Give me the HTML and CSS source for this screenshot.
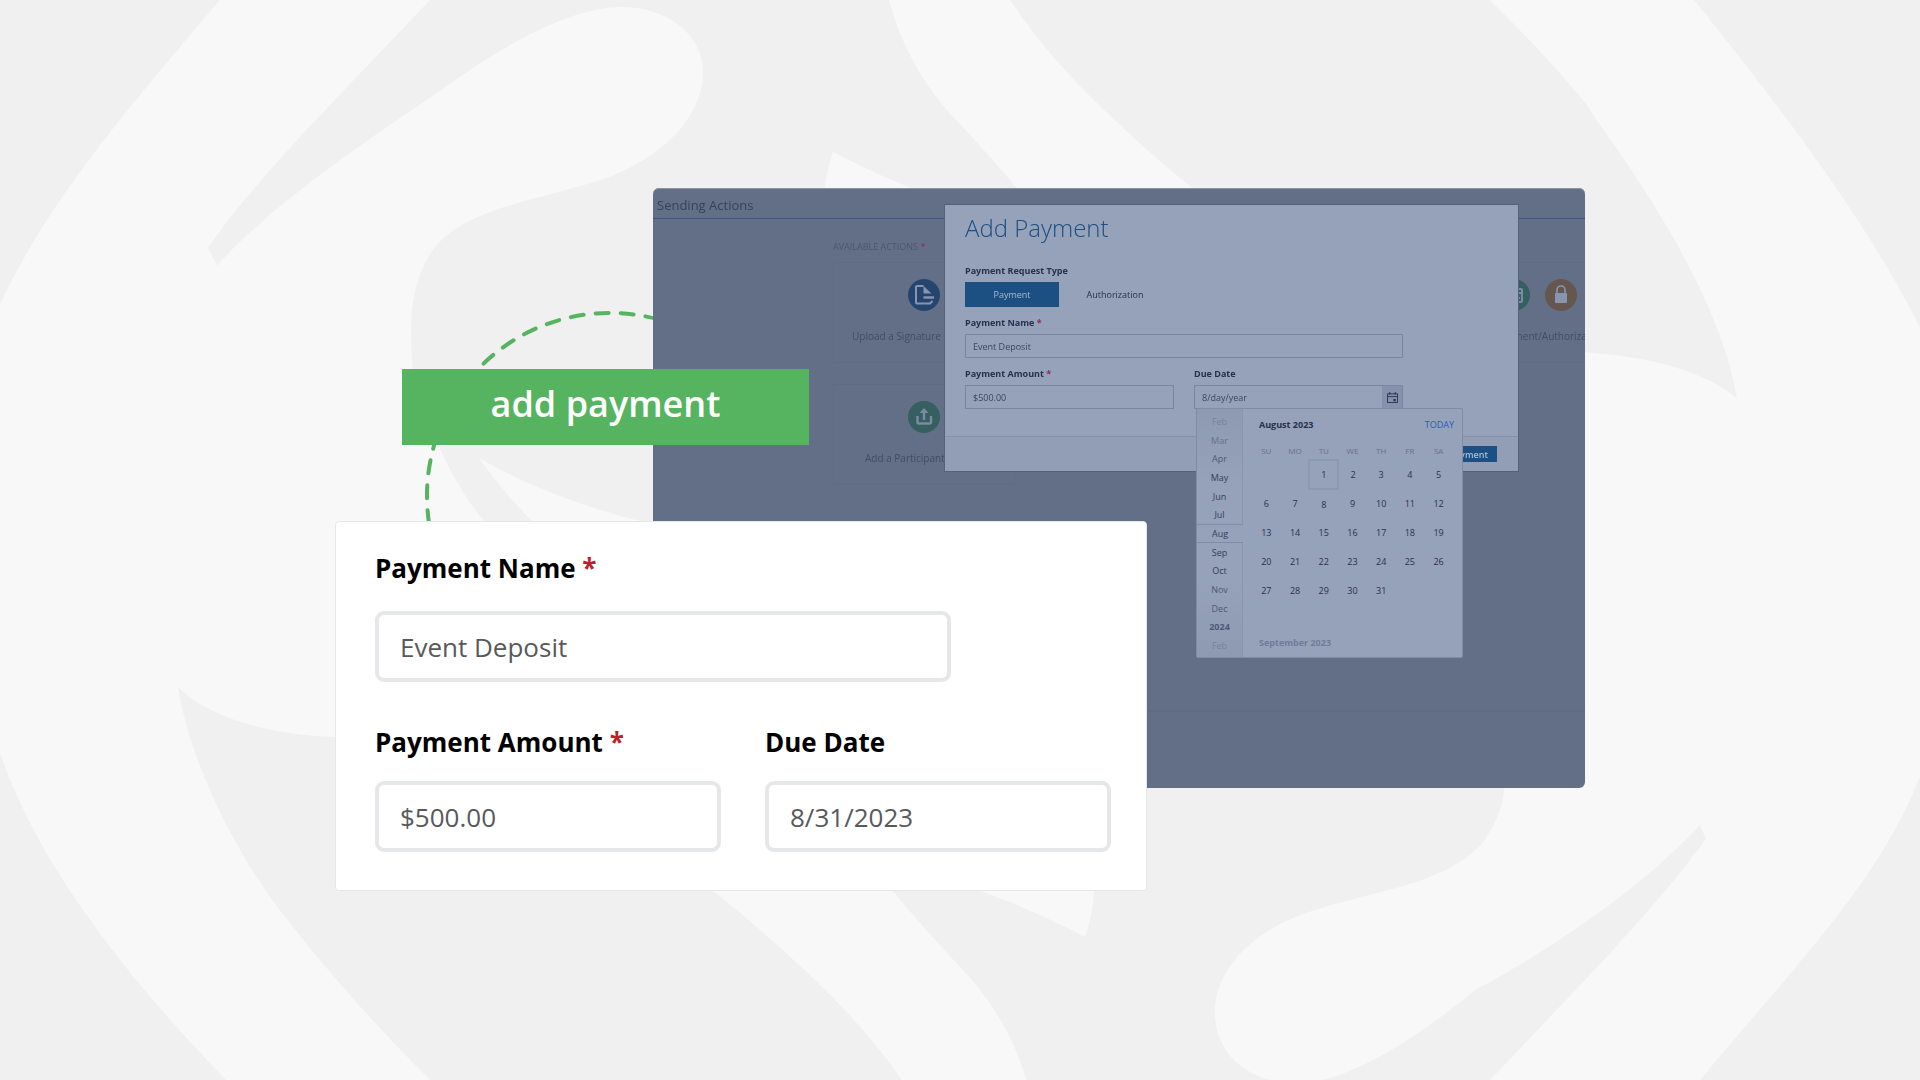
FILE: index.html
```html
<!DOCTYPE html>
<html lang="en">
<head>
    <meta charset="UTF-8">
    <meta name="viewport" content="width=device-width, initial-scale=1.0">
    <title>Add Payment</title>
    <link rel="stylesheet" href="styles.css">
</head>
<body>
    <svg class="backdrop" viewBox="0 0 1920 1080" preserveAspectRatio="xMidYMid slice" aria-hidden="true">
        <defs>
            <g id="band">
                <path d="M479 458C520 482 575 505 640 521L893 891Q918 922 960 967Q1010 1018 1029 1089H908Q870 1032 814 979Q756 924 713 891L532 521Q503 492 479 458Z"/>
                <path d="M900 850L981 891Q1040 913 1085 937Q1093 914 1094 891V850Z"/>
            </g>
        </defs>
        <path d="M220 0C130 105 45 205 0 305V752C32 850 110 960 226 1080H430C370 1020 325 968 286 918C235 854 190 762 178 687C205 714 262 735 335 737L600 700V600L484 521C465 498 449 470 438 444C415 412 411 366 411 331C411 300 417 272 434 248C470 205 545 200 612 176C670 152 703 112 703 72C703 35 668 7 621 7C570 7 500 47 440 91C367 140 270 206 217 265.500L208 248C250 185 340 95 430 0Z"/>
        <path d="M1694 0C1775 100 1870 225 1920 328V776C1880 880 1800 960 1700 1080H1490C1580 985 1650 915 1706 839L1700 825C1650 880 1560 945 1475 990C1415 1040 1345 1084 1294 1084C1247 1081 1215 1054 1215 1012C1215 973 1248 933 1306 913C1373 890 1448 885 1484 841C1500 817 1504 800 1504 788L1400 600L1580 352C1655 356 1712 375 1737 399C1725 325 1680 240 1613 143Q1598 123 1587 105C1560 72 1530 40 1490 0Z"/>
        <use href="#band"/>
        <use href="#band" transform="rotate(180 959 544.500)"/>
    </svg>

    <main class="stage">
        <svg class="arc" viewBox="0 0 340 340" aria-hidden="true">
            <path d="M94 335A183 183 0 0 1 335 135"/>
        </svg>

        <section class="panel">
            <h2 class="panel-title">Sending Actions</h2>
            <p class="panel-sub">AVAILABLE ACTIONS <span class="req">*</span></p>
            <div class="actions">
                <div class="action">
                    <svg viewBox="0 0 32 32">
                        <circle cx="16" cy="16" r="16" fill="#25456f"/>
                        <path d="M15.500 7H9Q8 7 8 8V23.500Q8 24.500 9 24.500H22L24.500 22" fill="none" stroke="#8795b0" stroke-width="2"/>
                        <path d="M15.500 7L23.500 14.500H15.500Z" fill="#8795b0"/>
                        <path d="M15.500 18.500H26" fill="none" stroke="#8795b0" stroke-width="2.400"/>
                    </svg>
                    <span class="action-name">Upload a Signature</span>
                </div>
                <div class="action action-pay">
                    <div class="icon-pair">
                        <svg viewBox="0 0 32 32">
                            <circle cx="16" cy="16" r="16" fill="#355f60"/>
                            <rect x="8" y="10" width="16" height="13" rx="1" fill="none" stroke="#7c8ba4" stroke-width="2"/>
                            <path d="M8 14H24M18 19H22" stroke="#7c8ba4" stroke-width="2"/>
                        </svg>
                        <svg viewBox="0 0 32 32">
                            <circle cx="16" cy="16" r="16" fill="#65574f"/>
                            <rect x="10" y="14" width="12" height="10" rx="1" fill="#8795b0"/>
                            <path d="M12 15V11A4 4 0 0 1 20 11V15" fill="none" stroke="#8795b0" stroke-width="1.600"/>
                        </svg>
                    </div>
                    <span class="action-name">Payment/Authorization</span>
                </div>
                <div class="action action-add">
                    <svg viewBox="0 0 32 32">
                        <circle cx="16" cy="16" r="16" fill="#355f60"/>
                        <path d="M9.500 15V21Q9.500 22.500 11 22.500H21.500Q23 22.500 23 21V15M16 19V10" fill="none" stroke="#7c8ba4" stroke-width="2.400"/>
                        <path d="M11.500 12L16 7L20.500 12Z" fill="#7c8ba4"/>
                    </svg>
                    <span class="action-name">Add a Participant</span>
                </div>
            </div>
            <div class="panel-foot"></div>

            <div class="modal" role="dialog" aria-labelledby="modal-title">
                <div class="modal-body">
                    <h1 id="modal-title">Add Payment</h1>
                    <div class="field">
                        <span class="label">Payment Request Type</span>
                        <div class="toggle">
                            <button type="button" class="on">Payment</button>
                            <button type="button">Authorization</button>
                        </div>
                    </div>
                    <div class="field">
                        <label class="label" for="m-name">Payment Name <span class="req">*</span></label>
                        <input type="text" id="m-name" value="Event Deposit">
                    </div>
                    <div class="row">
                        <div class="field">
                            <label class="label" for="m-amount">Payment Amount <span class="req">*</span></label>
                            <input type="text" id="m-amount" value="$500.00">
                        </div>
                        <div class="field">
                            <label class="label" for="m-date">Due Date</label>
                            <div class="date">
                                <input type="text" id="m-date" value="8/day/year">
                                <button type="button" class="date-btn" aria-label="Open calendar">
                                    <svg viewBox="0 0 12 12">
                                        <path d="M.500 2H11.500V11.500H.500ZM.500 5H11.500M3 0V3M9 0V3" fill="none" stroke="#26324c"/>
                                        <path d="M7 7.500H9.500V10H7Z" fill="#26324c"/>
                                    </svg>
                                </button>
                                <div class="calendar">
                                    <ul class="months">
                                        <li class="faint">Feb</li>
                                        <li class="dim">Mar</li>
                                        <li class="soft">Apr</li>
                                        <li>May</li>
                                        <li>Jun</li>
                                        <li>Jul</li>
                                        <li class="current">Aug</li>
                                        <li>Sep</li>
                                        <li>Oct</li>
                                        <li class="soft">Nov</li>
                                        <li class="soft">Dec</li>
                                        <li class="soft year">2024</li>
                                        <li class="faint">Feb</li>
                                    </ul>
                                    <div class="days">
                                        <div class="days-head">
                                            <strong>August 2023</strong>
                                            <a href="#">TODAY</a>
                                        </div>
                                        <table>
                                            <thead>
                                                <tr><th>SU</th><th>MO</th><th>TU</th><th>WE</th><th>TH</th><th>FR</th><th>SA</th></tr>
                                            </thead>
                                            <tbody>
                                                <tr><td></td><td></td><td class="today">1</td><td>2</td><td>3</td><td>4</td><td>5</td></tr>
                                                <tr><td>6</td><td>7</td><td>8</td><td>9</td><td>10</td><td>11</td><td>12</td></tr>
                                                <tr><td>13</td><td>14</td><td>15</td><td>16</td><td>17</td><td>18</td><td>19</td></tr>
                                                <tr><td>20</td><td>21</td><td>22</td><td>23</td><td>24</td><td>25</td><td>26</td></tr>
                                                <tr><td>27</td><td>28</td><td>29</td><td>30</td><td>31</td><td></td><td></td></tr>
                                            </tbody>
                                        </table>
                                        <strong class="next">September 2023</strong>
                                    </div>
                                </div>
                            </div>
                        </div>
                    </div>
                </div>
                <div class="modal-foot">
                    <button type="button">Add Payment</button>
                </div>
            </div>
        </section>

        <button type="button" class="add-btn">add payment</button>

        <form class="card">
            <div class="card-field card-name">
                <label for="name">Payment Name <span class="star">*</span></label>
                <input type="text" id="name" value="Event Deposit">
            </div>
            <div class="card-row">
                <div class="card-field">
                    <label for="amount">Payment Amount <span class="star">*</span></label>
                    <input type="text" id="amount" value="$500.00">
                </div>
                <div class="card-field">
                    <label for="date">Due Date</label>
                    <input type="text" id="date" value="8/31/2023">
                </div>
            </div>
        </form>
    </main>
</body>
</html>
```

FILE: styles.css
```css
* {
    box-sizing: border-box;
}
body {
    margin: 0;
    min-height: 100vh;
    display: flex;
    align-items: center;
    justify-content: center;
    background: #f0f0f0;
    font-family: "Open Sans", "Noto Sans", sans-serif;
}
h1, h2, p, ul {
    margin: 0;
    padding: 0;
}
button, input {
    font-family: inherit;
    border: 0;
    border-radius: 0;
    padding: 0;
    margin: 0;
}
.backdrop {
    position: fixed;
    top: 0;
    left: 0;
    width: 100%;
    height: 100%;
    fill: #f8f8f8;
}
.stage {
    position: relative;
    display: grid;
    grid-template-columns: 318px 494px 1fr;
    grid-template-rows: 333px 267px auto;
    width: 90%;
    max-width: 1250px;
    margin-bottom: 1px;
}
.arc {
    position: absolute;
    top: 0;
    left: 0;
    width: 340px;
    fill: none;
    stroke: #56b461;
    stroke-width: 4;
    stroke-linecap: round;
    stroke-dasharray: 13 12;
}

/* dimmed app screen */
.panel {
    grid-area: 1 / 2 / 3 / 4;
    position: relative;
    display: flex;
    flex-direction: column;
    overflow: hidden;
    border-radius: 6px;
    background: #636f87;
    color: #36415c;
    box-shadow: inset 0 1px #8d95a5;
}
.panel-title {
    height: 31px;
    padding-left: 4px;
    border-bottom: 1px solid #3b5681;
    font-size: 13px;
    font-weight: 400;
    line-height: 35px;
}
.panel-sub {
    padding: 22px 0 0 180px;
    color: #4b5671;
    font-size: 9px;
    line-height: 12px;
}
.req {
    color: #8a2f50;
}
.actions {
    display: grid;
    grid-template-columns: 182px 220px;
    grid-auto-rows: 101px;
    justify-content: space-between;
    row-gap: 21px;
    margin: 9px 0 0 180px;
    width: 810px;
}
.action {
    display: flex;
    flex-direction: column;
    align-items: center;
    padding-top: 16px;
    border: 1px solid #606c85;
    color: #414c68;
    font-size: 10px;
    line-height: 14px;
}
.action svg {
    width: 32px;
    height: 32px;
}
.action-name {
    width: 100%;
    margin-top: 18px;
    padding-left: 18px;
    white-space: nowrap;
}
.action-add .action-name {
    padding-left: 31px;
}
.action-pay {
    align-items: stretch;
}
.icon-pair {
    display: flex;
    gap: 15px;
    padding-left: 74px;
    height: 32px;
}
.action-pay .action-name {
    padding-left: 73px;
}
.panel-foot {
    margin-top: auto;
    height: 78px;
    border-top: 2px solid #5f6a83;
}

.modal {
    position: absolute;
    top: 17px;
    left: 292px;
    width: 573px;
    background: #96a1ba;
    box-shadow: 0 0 0 1px #56627b;
    color: #26324c;
    font-size: 9px;
}
.modal-body {
    padding: 7px 115px 27px 20px;
}
.modal h1 {
    margin-bottom: 20px;
    color: #1c4f82;
    font-size: 24px;
    font-weight: 300;
    line-height: 32px;
}
.field {
    display: flex;
    flex-direction: column;
    gap: 5px;
    margin-bottom: 9px;
}
.row .field {
    flex: 1;
    margin-bottom: 0;
}
.label {
    font-weight: 700;
    line-height: 13px;
}
.toggle button {
    width: 94px;
    height: 25px;
    background: none;
    color: inherit;
    font-size: 9px;
}
.toggle {
    display: flex;
    gap: 9px;
}
.toggle .on {
    background: #1c5082;
    color: #a9b9d2;
}
.modal input {
    width: 100%;
    height: 24px;
    padding: 0 7px;
    border: 1px solid #7986a1;
    background: none;
    color: #3a4661;
    font-size: 9px;
}
.row {
    display: flex;
    gap: 20px;
}
.date {
    position: relative;
    display: flex;
}
.date-btn {
    position: absolute;
    top: 1px;
    right: 1px;
    display: flex;
    align-items: center;
    justify-content: center;
    width: 20px;
    height: 22px;
    background: #8592ae;
}
.date-btn svg {
    width: 11px;
    height: 11px;
}
.modal-foot {
    display: flex;
    justify-content: flex-end;
    padding: 9px 21px;
    border-top: 1px solid #8490ab;
    background: #929db6;
}
.modal-foot button {
    height: 16px;
    padding: 0 9px;
    background: #1c5082;
    color: #b0bdd4;
    font-size: 9px;
    font-weight: 600;
}

.calendar {
    position: absolute;
    top: 23px;
    left: 2px;
    display: flex;
    width: 267px;
    height: 250px;
    border: 1px solid #7f8ca7;
    border-radius: 2px;
    background: #96a1ba;
}
.months {
    display: grid;
    grid-template-rows: repeat(13, 1fr);
    width: 46px;
    padding: 3px 0 2px;
    border-right: 1px solid #8a96b0;
    background: linear-gradient(#8e99b2, #96a1ba 30%, #96a1ba 70%, #8e99b2);
    list-style: none;
}
.months li {
    display: flex;
    align-items: center;
    justify-content: center;
    color: #333f5a;
}
.months .soft {
    color: #4d5974;
}
.months .dim {
    color: #66728d;
}
.months .faint {
    color: #7783a0;
}
.months .year {
    font-weight: 700;
}
.months .current {
    margin-right: -1px;
    border: solid #7f8ca7;
    border-width: 1px 0;
    background: #96a1ba;
}
.days {
    flex: 1;
    padding: 9px 8px 0 9px;
}
.days-head {
    display: flex;
    justify-content: space-between;
    padding-left: 7px;
    line-height: 14px;
}
.days-head a {
    color: #2460bd;
    text-decoration: none;
}
.days table {
    width: 100%;
    margin-top: 9px;
    border-collapse: collapse;
    table-layout: fixed;
    text-align: center;
}
.days th {
    height: 19px;
    padding: 0;
    color: #66728d;
    font-size: 8px;
    font-weight: 400;
}
.days td {
    height: 29px;
    padding: 0;
}
.days .today {
    border: 2px solid #8d99b2;
}
.days .next {
    display: block;
    margin-top: 31px;
    padding-left: 7px;
    color: #707c98;
}

/* callout button and enlarged form */
.add-btn {
    grid-area: 1 / 1 / 2 / 3;
    z-index: 1;
    align-self: end;
    width: 407px;
    height: 76px;
    margin: 0 0 76px 67px;
    padding-bottom: 7px;
    background: #56b461;
    color: #fff;
    font-size: 36px;
    font-weight: 600;
}
.card {
    grid-area: 2 / 1 / 4 / 3;
    z-index: 1;
    padding: 28px 35px 38px 39px;
    border: 1px solid #e6e7e8;
    border-radius: 4px;
    background: #fff;
}
.card-row {
    display: flex;
    gap: 44px;
}
.card-field {
    flex: 1;
    display: flex;
    flex-direction: column;
    gap: 21px;
}
.card-name {
    width: 576px;
    gap: 25px;
    margin-bottom: 42px;
}
.card label {
    font-size: 26px;
    font-weight: 700;
    line-height: 36px;
}
.card .star {
    color: #be1e2d;
}
.card input {
    width: 100%;
    height: 71px;
    padding: 0 21px;
    border: 4px solid #e6e7e8;
    border-radius: 9px;
    background: #fff;
    color: #58595b;
    font-size: 26px;
}
```
